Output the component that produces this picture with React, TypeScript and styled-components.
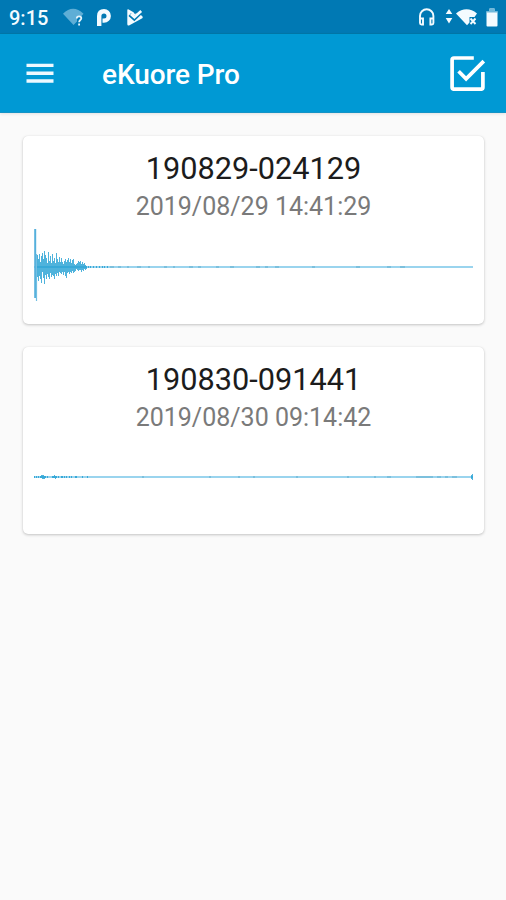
import React from "react";
import styled, { createGlobalStyle } from "styled-components";

const GlobalStyle = createGlobalStyle`
  * { box-sizing: border-box; }
  body { margin: 0; background: #fafafa; font-family: Roboto, "Open Sans", sans-serif; }
`;

const Screen = styled.div`
  display: flex;
  flex-direction: column;
  width: 506px;
  height: 900px;
  overflow: hidden;
  background: #fafafa;
`;

const StatusBar = styled.div`
  display: flex;
  align-items: center;
  flex: none;
  height: 34px;
  padding: 1px 8px 0 9px;
  background: #0079b4;
  border-bottom: 1px solid #0077a9;
  color: #f4fbff;
`;

const Clock = styled.span`
  width: 54px;
  padding-top: 1px;
  font-size: 20px;
  font-weight: 500;
  line-height: 34px;
`;

const StatusIcon = styled.svg<{ $w: number; $gap?: number }>`
  display: block;
  flex: none;
  width: ${(p) => p.$w}px;
  height: 24px;
  margin-left: ${(p) => p.$gap ?? 0}px;
`;

const Spacer = styled.div`
  flex: 1;
`;

const AppBar = styled.header`
  display: flex;
  align-items: center;
  flex: none;
  height: 79px;
  padding: 0 20px 0 26px;
  background: #0099d4;
  border-bottom: 1px solid #1493c6;
  box-shadow: 0 1px 3px rgba(0, 0, 0, 0.1);
  color: #fff;
`;

const IconButton = styled.button`
  display: flex;
  padding: 0;
  border: 0;
  background: none;
  color: inherit;
`;

const Title = styled.h1`
  flex: 1;
  margin: 3px 0 0 48px;
  font-size: 28px;
  font-weight: 500;
  line-height: 34px;
  letter-spacing: -0.1px;
`;

const List = styled.main`
  display: flex;
  flex-direction: column;
  gap: 23px;
  padding: 23px 22px 0 23px;
`;

const Card = styled.article`
  display: flex;
  flex-direction: column;
  align-items: center;
  height: 187.5px;
  padding-top: 15.4px;
  border-radius: 5px;
  background: #fff;
  box-shadow: 0 1px 3px rgba(0, 0, 0, 0.22), 0 0 1px rgba(0, 0, 0, 0.1);
`;

const Name = styled.h2`
  margin: 0;
  font-size: 30.7px;
  font-weight: 400;
  line-height: 36px;
  color: #1c1c1c;
`;

const DateText = styled.time`
  margin-top: 5.1px;
  font-size: 25px;
  font-weight: 400;
  line-height: 30px;
  color: #7a7a7a;
`;

const Wave = styled.svg`
  display: block;
  width: 440px;
  height: 76px;
  margin-top: 6.5px;
`;

type Stroke = [x: number, top: number, bottom: number];

// Each entry is a vertical stroke: distance along the baseline, reach above, reach below.
const burst: Stroke[] = [
  [4, 12, 10], [5, 8, 14], [6, 13, 9], [7, 5, 12], [8, 11, 16], [9, 14, 5],
  [10, 8, 11], [11, 16, 17], [12, 12, 8], [13, 9, 12], [14, 4, 7], [15, 15, 10],
  [16, 6, 12], [17, 11, 6], [18, 4, 10], [19, 13, 8], [20, 6, 9], [21, 9, 12],
  [22, 4, 7], [23, 14, 9], [24, 8, 6], [25, 5, 9], [26, 10, 5], [27, 5, 6],
  [28, 9, 7], [29, 5, 5], [30, 3, 8], [31, 6, 5], [32, 8, 9], [33, 5, 11],
  [34, 7, 6], [35, 9, 5], [36, 5, 7], [37, 8, 5], [38, 4, 6], [39, 7, 4],
  [40, 8, 6], [41, 3, 5], [42, 2, 4], [43, 3, 2], [44, 4, 3], [45, 6, 4],
  [46, 5, 3], [47, 6, 3], [48, 3, 5], [49, 5, 3], [50, 3, 4], [51, 4, 2],
  [52, 2, 3], [53, 1, 2], [55, 1, 1], [57, 1, 1], [60, 1, 1], [63, 1, 1],
  [66, 1, 1], [69, 1, 1], [71, 1, 1], [74, 1, 1],
];

const quiet: Stroke[] = [
  [1, 1, 1], [3, 1, 1], [5, 1, 1], [7, 1, 1], [8, 2, 1], [9, 2, 2], [10, 2, 2],
  [11, 1, 2], [12, 1, 1], [14, 1, 1], [19, 1, 1], [20, 1, 1], [21, 2, 1],
  [22, 1, 2], [23, 1, 1], [25, 1, 1], [28, 1, 1], [29, 1, 1], [31, 1, 1],
  [33, 1, 1], [36, 1, 1], [38, 1, 1], [42, 1, 1], [43, 1, 1], [49, 1, 1], [54, 1, 1],
  [438, 2, 2], [439, 3, 3],
];

const tracePath = (strokes: Stroke[]) =>
  strokes.map(([x, up, down]) => `M${x - 0.5} ${38 - up}V${38 + down}`).join("");

const recordings = [
  {
    name: "190829-024129",
    date: "2019/08/29 14:41:29",
    trace: tracePath(burst),
    spike: true,
    ticks: "M76 38h4m4 0h3m6 0h2m8 0h4m7 0h2m14 0h3m6 0h2m14 0h4m5 0h3m15 0h3m11 0h4m22 0h4m5 0h3m7 0h4m33 0h3m41 0h4m27 0h4m9 0h5",
  },
  {
    name: "190830-091441",
    date: "2019/08/30 09:14:42",
    trace: tracePath(quiet),
    spike: false,
    ticks: "M108 38h2m65 0h2m27 0h2m13 0h2m41 0h2m49 0h2m25 0h2m11 0h4m25 0h17m4 0h4m4 0h3m4 0h5",
  },
];

function Waveform({ trace, spike, ticks }: { trace: string; spike: boolean; ticks: string }) {
  return (
    <Wave viewBox="0 0 440 76" fill="none">
      <path d="M0 38H439" stroke="#79c6e8" strokeWidth="1.5" />
      <path d={ticks} stroke="#4b9fc2" strokeWidth="1.4" opacity=".5" />
      {spike && (
        <>
          <path d="M1.2 0V69" stroke="#55b0dc" strokeWidth="2" />
          <path d="M2.5 25V72" stroke="#73bfe2" strokeWidth="1.2" />
        </>
      )}
      <path d={trace} stroke="#189bd1" strokeWidth=".9" opacity=".85" />
    </Wave>
  );
}

export default function App() {
  return (
    <>
      <GlobalStyle />
      <Screen>
        <StatusBar>
          <Clock>9:15</Clock>
          <StatusIcon $w={22} viewBox="0 0 22 24">
            <path d="M0 8.7Q10-1 20.5 8.7L18 11.5H14v5L10.5 20Z" fill="#5eaed6" />
            <path d="M13.8 13.5Q13.8 11.3 16.1 11.3Q18.3 11.3 18.3 13.2C18.3 15 16.1 15 16.1 17.2M16.1 18.6v2" fill="none" stroke="#e5f5fc" strokeWidth="1.8" />
          </StatusIcon>
          <StatusIcon $w={16} $gap={11} viewBox="0 0 16 24">
            <path d="M3.2 21V11Q3.2 6.2 8 6.2A4.5 4.5 0 0 1 8 15.6H6.5" fill="none" stroke="currentColor" strokeWidth="4.4" />
          </StatusIcon>
          <StatusIcon $w={18} $gap={14} viewBox="0 0 18 24">
            <path d="M1.3 5.2Q1.3 3.8 2.7 4.4L7.5 7.2L8.8 9L12.2 7.8L16.3 11.2Q17.3 12.3 16.3 13.3L3 20.5Q1.3 21 1.3 19Z" fill="currentColor" />
            <path d="M3.8 9.6l4.5 4L15.5 6.5" fill="none" stroke="#0079b4" strokeWidth="4" />
            <path d="M4.8 9l3.6 3.2L15.2 6" fill="none" stroke="currentColor" strokeWidth="2.6" />
          </StatusIcon>
          <Spacer />
          <StatusIcon $w={18} viewBox="0 0 18 24">
            <path d="M2 18V11a6.7 6.7 0 0 1 13.4 0V18M2 13.5h3v6H3.5Q2 19.5 2 18M15.4 13.5h-3v6h1.5q1.5 0 1.5-1.5" fill="none" stroke="currentColor" strokeWidth="1.9" />
          </StatusIcon>
          <StatusIcon $w={8} $gap={9} viewBox="0 0 8 24">
            <path d="M4 4l3.3 5H.7ZM4 18.5L.7 13h6.6Z" fill="currentColor" />
          </StatusIcon>
          <StatusIcon $w={22} $gap={3} viewBox="0 0 22 24">
            <path d="M0 8.4Q10.5.2 21 8.4L18.5 12H13.5V17.5L11 20.2Z" fill="currentColor" />
            <path d="M14.5 13.5l5 5.5m0-5.5l-5 5.5" stroke="currentColor" strokeWidth="1.9" />
          </StatusIcon>
          <StatusIcon $w={12} $gap={8} viewBox="0 0 12 24">
            <path d="M3.5 3.5h5V6h2q1 0 1 1v13.5q0 1-1 1h-9q-1 0-1-1V7q0-1 1-1h2Z" fill="currentColor" />
            <path d="M3.5 3.5h5V6h3v1.5H.5V6h3Z" fill="#70b8da" />
          </StatusIcon>
        </StatusBar>
        <AppBar>
          <IconButton aria-label="Menu">
            <svg width="28" height="28" viewBox="0 0 28 28">
              <path d="M.5 6.4h27M.5 14.2h27M.5 22h27" stroke="#edf9ff" strokeWidth="3.4" />
            </svg>
          </IconButton>
          <Title>eKuore Pro</Title>
          <IconButton aria-label="Select">
            <svg width="36" height="36" viewBox="0 0 36 36" fill="none" stroke="#fff" strokeWidth="3.7">
              <path d="M23.8 3H4Q2.1 3 2.1 4.9V32.3q0 1.9 1.9 1.9H31q1.9 0 1.9-1.9V17" />
              <path d="M8.6 16.3l7.5 7.5L33.8 6.1" />
            </svg>
          </IconButton>
        </AppBar>
        <List>
          {recordings.map((r) => (
            <Card key={r.name}>
              <Name>{r.name}</Name>
              <DateText>{r.date}</DateText>
              <Waveform trace={r.trace} spike={r.spike} ticks={r.ticks} />
            </Card>
          ))}
        </List>
      </Screen>
    </>
  );
}
